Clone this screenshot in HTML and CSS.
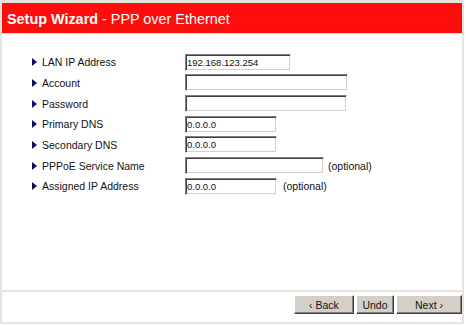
FILE: index.html
```html
<!DOCTYPE html>
<html lang="en">
<head>
    <meta charset="UTF-8">
    <title>Setup Wizard - PPP over Ethernet</title>
    <link rel="stylesheet" href="styles.css">
</head>
<body>
    <div class="frame">
        <div class="header"><b>Setup Wizard</b> - PPP over Ethernet</div>

        <div class="content">
            <div class="row">
                <span class="label"><i class="arrow"></i>LAN IP Address</span>
                <input type="text" class="ip-wide" value="192.168.123.254">
            </div>
            <div class="row">
                <span class="label"><i class="arrow"></i>Account</span>
                <input type="text" class="long" value="">
            </div>
            <div class="row">
                <span class="label"><i class="arrow"></i>Password</span>
                <input type="password" class="long pass" value="">
            </div>
            <div class="row">
                <span class="label"><i class="arrow"></i>Primary DNS</span>
                <input type="text" class="ip" value="0.0.0.0">
            </div>
            <div class="row">
                <span class="label"><i class="arrow"></i>Secondary DNS</span>
                <input type="text" class="ip" value="0.0.0.0">
            </div>
            <div class="row">
                <span class="label"><i class="arrow"></i>PPPoE Service Name</span>
                <input type="text" class="medium" value="">
                <span class="note">(optional)</span>
            </div>
            <div class="row">
                <span class="label"><i class="arrow"></i>Assigned IP Address</span>
                <input type="text" class="ip" value="0.0.0.0">
                <span class="note">(optional)</span>
            </div>
        </div>

        <div class="footer">
            <button class="btn-back">&lsaquo; Back</button>
            <button class="btn-undo">Undo</button>
            <button class="btn-next">Next &rsaquo;</button>
        </div>
    </div>
</body>
</html>
```

FILE: styles.css
```css
body {
    margin: 0;
    padding: 0;
    background: #fff;
    font-family: "Liberation Sans", Arial, sans-serif;
    color: #111;
}
.frame {
    width: 460px;
    height: 319px;
    border: solid #e6e4da;
    border-width: 3px 2px 2px 2px;
    display: flex;
    flex-direction: column;
}
.header {
    height: 30px;
    line-height: 32px;
    overflow: hidden;
    background: #ff0d0d;
    border-bottom: 1px solid #f6d2cc;
    color: #fff;
    font-size: 14.4px;
    padding-left: 5px;
    white-space: nowrap;
}
.content {
    flex: 1;
    padding: 18px 0 0 30px;
}
.row {
    display: flex;
    align-items: center;
    height: 20.67px;
    font-size: 10.5px;
}
.label {
    width: 153px;
    display: flex;
    align-items: center;
}
.arrow {
    width: 0;
    height: 0;
    border-left: 5px solid #0e0e62;
    border-top: 4px solid transparent;
    border-bottom: 4px solid transparent;
    margin-right: 5px;
}
input {
    box-sizing: border-box;
    height: 17px;
    margin: 0;
    padding: 0 2px 0 1px;
    font-family: "Liberation Sans", Arial, sans-serif;
    font-size: 9.5px;
    color: #111;
    background: #fff;
    border: 1px solid;
    border-color: #808080 #fff #fff #808080;
    box-shadow: inset 1px 1px #404040, inset -1px -1px #d4d0c8;
    outline: none;
}
.ip-wide { width: 106px; }
.long { width: 163px; }
.pass { width: 162px; }
.ip { width: 92px; }
.medium { width: 139px; }
.note {
    margin-left: 4px;
}
.ip + .note {
    margin-left: 6px;
}
.footer {
    height: 32px;
    border-top: 2px solid #e6e4da;
    display: flex;
    justify-content: flex-end;
    align-items: flex-start;
    gap: 2px;
    padding-top: 3px;
    box-sizing: border-box;
}
button {
    height: 19px;
    margin: 0;
    padding: 0;
    font-family: "Liberation Sans", Arial, sans-serif;
    font-size: 10.5px;
    color: #111;
    background: #d4d0c8;
    border: 1px solid;
    border-color: #fff #404040 #404040 #fff;
    box-shadow: inset -1px -1px #808080;
    cursor: pointer;
}
.btn-back { width: 60px; }
.btn-undo { width: 38px; }
.btn-next { width: 66px; }
```
